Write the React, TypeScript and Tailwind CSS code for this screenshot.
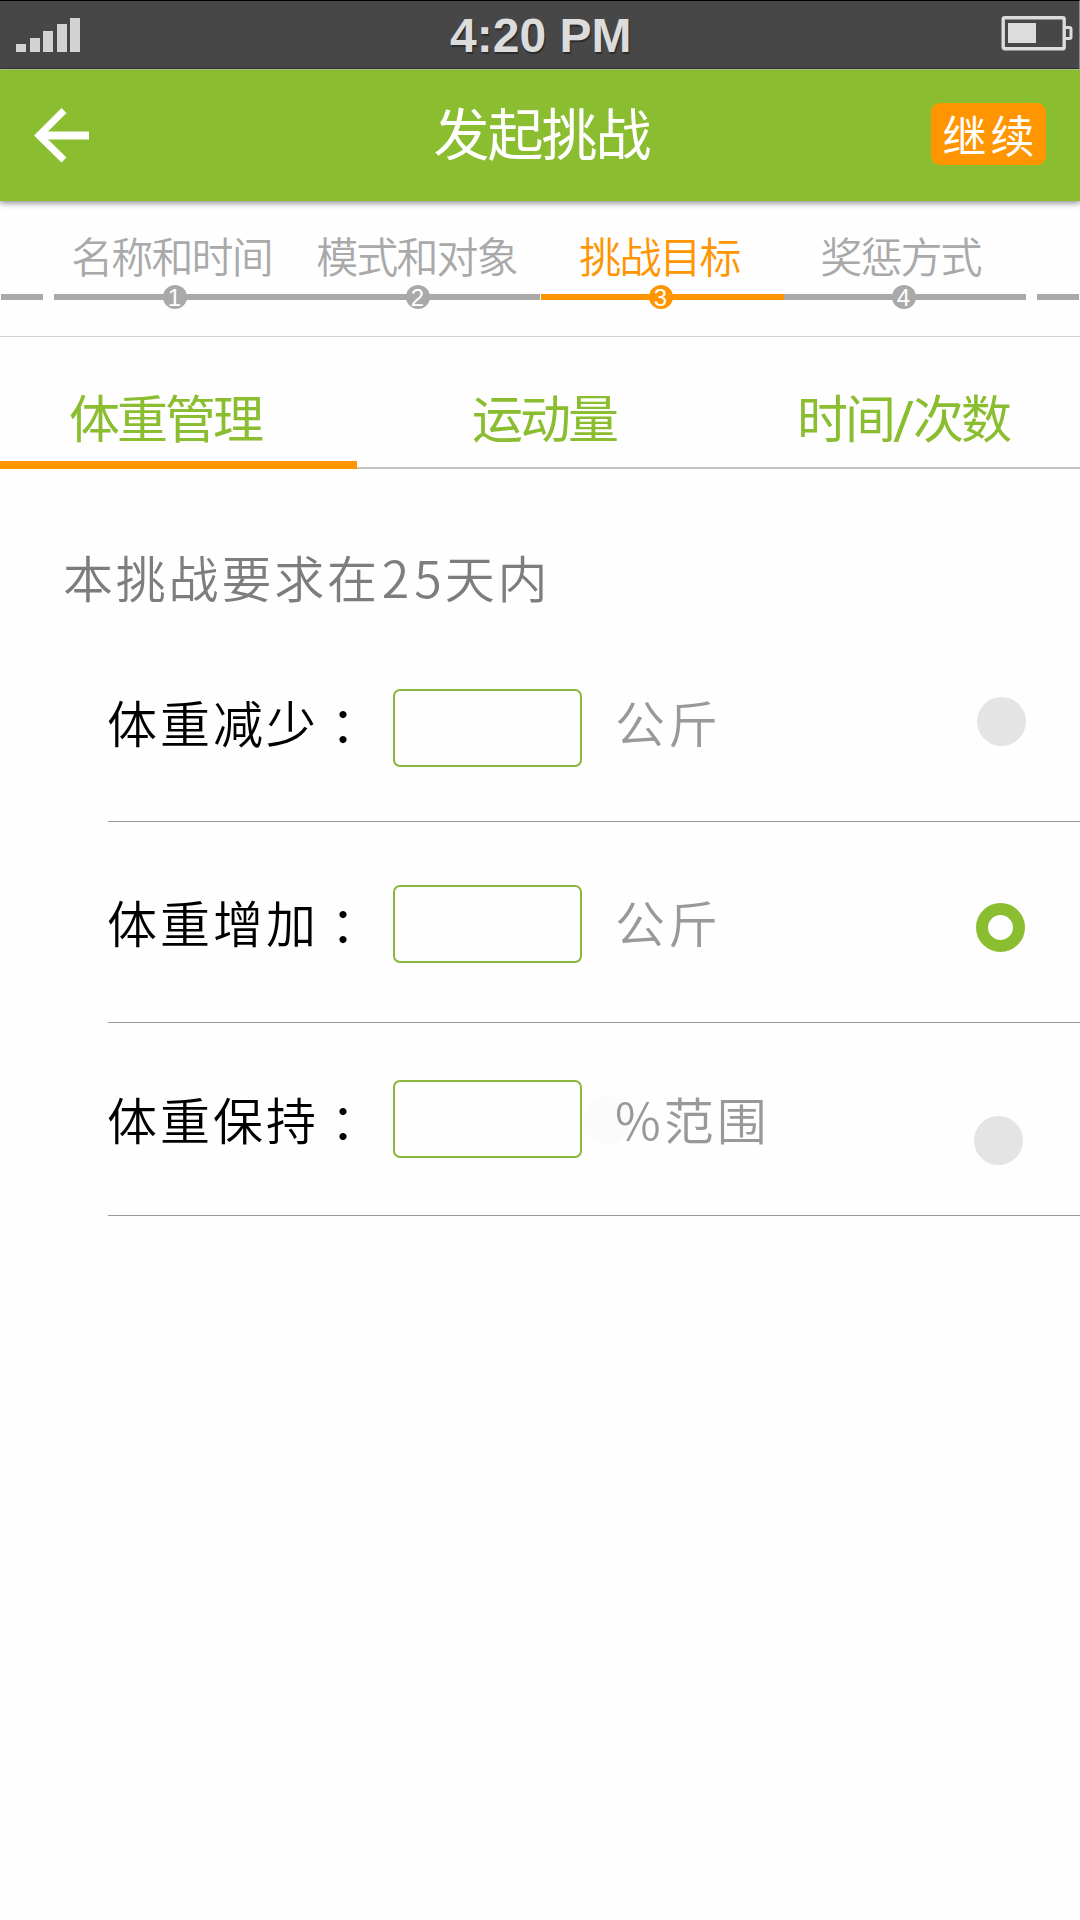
import React from "react";

const signalBars = ["h-[8px]", "h-[14px]", "h-[21px]", "h-[28px]", "h-[34px]"];

const steps = [
  { label: "名称和时间", active: false, text: "left-[-4px]" },
  { label: "模式和对象", active: false, text: "left-[-2px]" },
  { label: "挑战目标", active: true, text: "left-[-2px]" },
  { label: "奖惩方式", active: false, text: "left-[-4px]" },
];

type Goal = {
  label: string;
  unit: string;
  selected: boolean;
  row: string;
  text: string;
  radio: string;
  ghost?: boolean;
};

const goals: Goal[] = [
  { label: "体重减少", unit: "公斤", selected: false, row: "h-[182px] pt-[49px]", text: "mt-[2px]", radio: "mt-[8px] mr-[54px]" },
  { label: "体重增加", unit: "公斤", selected: true, row: "h-[201px] pt-[63px]", text: "mt-[6px]", radio: "mt-[18px] mr-[55px]" },
  { label: "体重保持", unit: "%范围", selected: false, row: "h-[193px] pt-[57px]", text: "mt-[8px]", radio: "mt-[36px] mr-[57px]", ghost: true },
];

function StatusBar() {
  return (
    <div className="flex h-[70px] items-start justify-between border-t border-r border-b border-t-black border-r-[#8c8c8c] border-b-[#b9cf92] bg-[#474747] shadow-[inset_0_-1px_0_#34382d]">
      <div className="mt-[17px] ml-[16px] flex h-[34px] w-[180px] items-end gap-[3.5px]">
        {signalBars.map((h) => (
          <div key={h} className={`w-[10px] bg-[#d3d3d3] ${h}`} />
        ))}
      </div>
      <div className="mt-[6px] ml-[254px] w-[190px] text-[48px] leading-[58px] font-bold whitespace-nowrap text-[#dcdcdc] [font-family:'Liberation_Sans',sans-serif] [text-shadow:1px_2px_1px_#2c2c2c]">
        4:20 PM
      </div>
      <svg className="mt-[15px] mr-[5px] ml-auto" width="74" height="36" viewBox="0 0 74 36" fill="none">
        <rect x="3.2" y="1.7" width="61" height="31" rx="1.5" stroke="#dcdcdc" strokeWidth="3.4" />
        <rect x="8" y="7" width="28" height="20" fill="#dcdcdc" />
        <path d="M65 11.5H69.5Q71 11.5 71 13V21Q71 22.5 69.5 22.5H65" stroke="#dcdcdc" strokeWidth="3" />
      </svg>
    </div>
  );
}

function Header() {
  return (
    <header className="relative z-10 grid h-[131px] grid-cols-3 items-start bg-[#8bbd30] shadow-[0_2px_6px_rgba(0,0,0,0.45)]">
      <svg className="mt-[36px] ml-[32px]" width="60" height="60" viewBox="0 0 60 60" fill="none">
        <path d="M32 4.5 7 29.5 32 54" stroke="#fff" strokeWidth="7" />
        <path d="M9 29.5H57" stroke="#fff" strokeWidth="8" />
      </svg>
      <h1 className="mt-[21px] ml-[3px] text-center text-[56px] leading-[80px] tracking-[-2px] whitespace-nowrap text-white">发起挑战</h1>
      <button className="mt-[33px] mr-[34px] h-[62px] w-[115px] justify-self-end rounded-[9px] bg-[#ff9500] pl-[4px] text-[44px] leading-[58px] tracking-[4px] whitespace-nowrap text-white">
        继续
      </button>
    </header>
  );
}

function Steps() {
  return (
    <nav className="flex h-[136px] items-start justify-between border-b border-[#d4d4d4] px-px">
      <div className="mt-[93px] h-[6px] w-[42px] bg-[#a9a9a9]" />
      <div className="flex w-[972px]">
        {steps.map((s, i) => (
          <div key={s.label} className="flex w-[243px] flex-col items-center">
            <div
              className={`relative mt-[24px] h-[60px] text-[42px] leading-[60px] font-[350] tracking-[-1.9px] whitespace-nowrap ${s.text} ${
                s.active ? "text-[#ff9500]" : "text-[#a9a9a9]"
              }`}
            >
              {s.label}
            </div>
            <div className="grid h-[24px] w-full place-items-center">
              <div className={`relative col-start-1 row-start-1 h-[6px] w-full ${s.active ? "left-px z-10 bg-[#ff9500]" : "bg-[#a9a9a9]"}`} />
              <div
                className={`relative right-px z-20 col-start-1 row-start-1 h-[24px] w-[24px] rounded-full text-center text-[24px] leading-[26px] text-white [font-family:'Liberation_Sans',sans-serif] ${
                  s.active ? "bg-[#ff9500]" : "bg-[#a9a9a9]"
                }`}
              >
                {i + 1}
              </div>
            </div>
          </div>
        ))}
      </div>
      <div className="mt-[93px] h-[6px] w-[42px] bg-[#a9a9a9]" />
    </nav>
  );
}

function Tabs() {
  return (
    <div className="flex h-[132px] text-[51px] leading-[76px] tracking-[-3px] whitespace-nowrap text-[#8bbd30]">
      <div className="w-[357px] border-b-8 border-[#ff9500] pt-[41px] pl-[69px]">体重管理</div>
      <div className="flex flex-1 border-b-2 border-[#c4c4c4] pt-[41px]">
        <div className="w-[440px] pl-[115px]">运动量</div>
        <div>
          时间
          <span className="relative top-[4px] inline-block w-[20px] text-[57px] leading-none tracking-normal [font-family:'Open_Sans',sans-serif]">/</span>
          次数
        </div>
      </div>
    </div>
  );
}

function GoalRow({ goal }: { goal: Goal }) {
  return (
    <div className={`ml-[108px] flex items-start border-b border-[#999] text-[50px] leading-[60px] tracking-[3px] whitespace-nowrap ${goal.row}`}>
      <div className={`-ml-px w-[286px] font-[350] text-black ${goal.text}`}>
        {goal.label}
        <span className="relative top-[3px] -left-px [font-family:'Noto_Sans_CJK_TC',sans-serif]" lang="zh-TW">：</span>
      </div>
      <div className="h-[78px] w-[189px] rounded-[7px] border-2 border-[#8bb63c]" />
      <div className={`relative ml-[33px] font-[350] text-[#999] ${goal.text}`}>
        {goal.ghost && <div className="absolute top-[8px] -left-[33px] -z-10 h-[49px] w-[49px] rounded-full bg-[#fbfbfb]" />}
        {goal.unit}
      </div>
      <div className={`ml-auto h-[49px] w-[49px] rounded-full ${goal.radio} ${goal.selected ? "border-[12px] border-[#8bbd30]" : "bg-[#e4e4e4]"}`} />
    </div>
  );
}

export default function App() {
  return (
    <div className="isolate h-[1920px] w-[1080px] overflow-hidden bg-[#fefefe] [font-family:'Noto_Sans_CJK_SC',sans-serif]">
      <StatusBar />
      <Header />
      <Steps />
      <Tabs />
      <div className="h-[171px] pt-[75px] pl-[63px] text-[50px] leading-[64px] font-[350] tracking-[2.8px] whitespace-nowrap text-[#7d7d7d]">
        本挑战要求在<span className="relative left-[2px] tracking-[5px]">25</span>天内
      </div>
      {goals.map((g) => (
        <GoalRow key={g.label} goal={g} />
      ))}
    </div>
  );
}
